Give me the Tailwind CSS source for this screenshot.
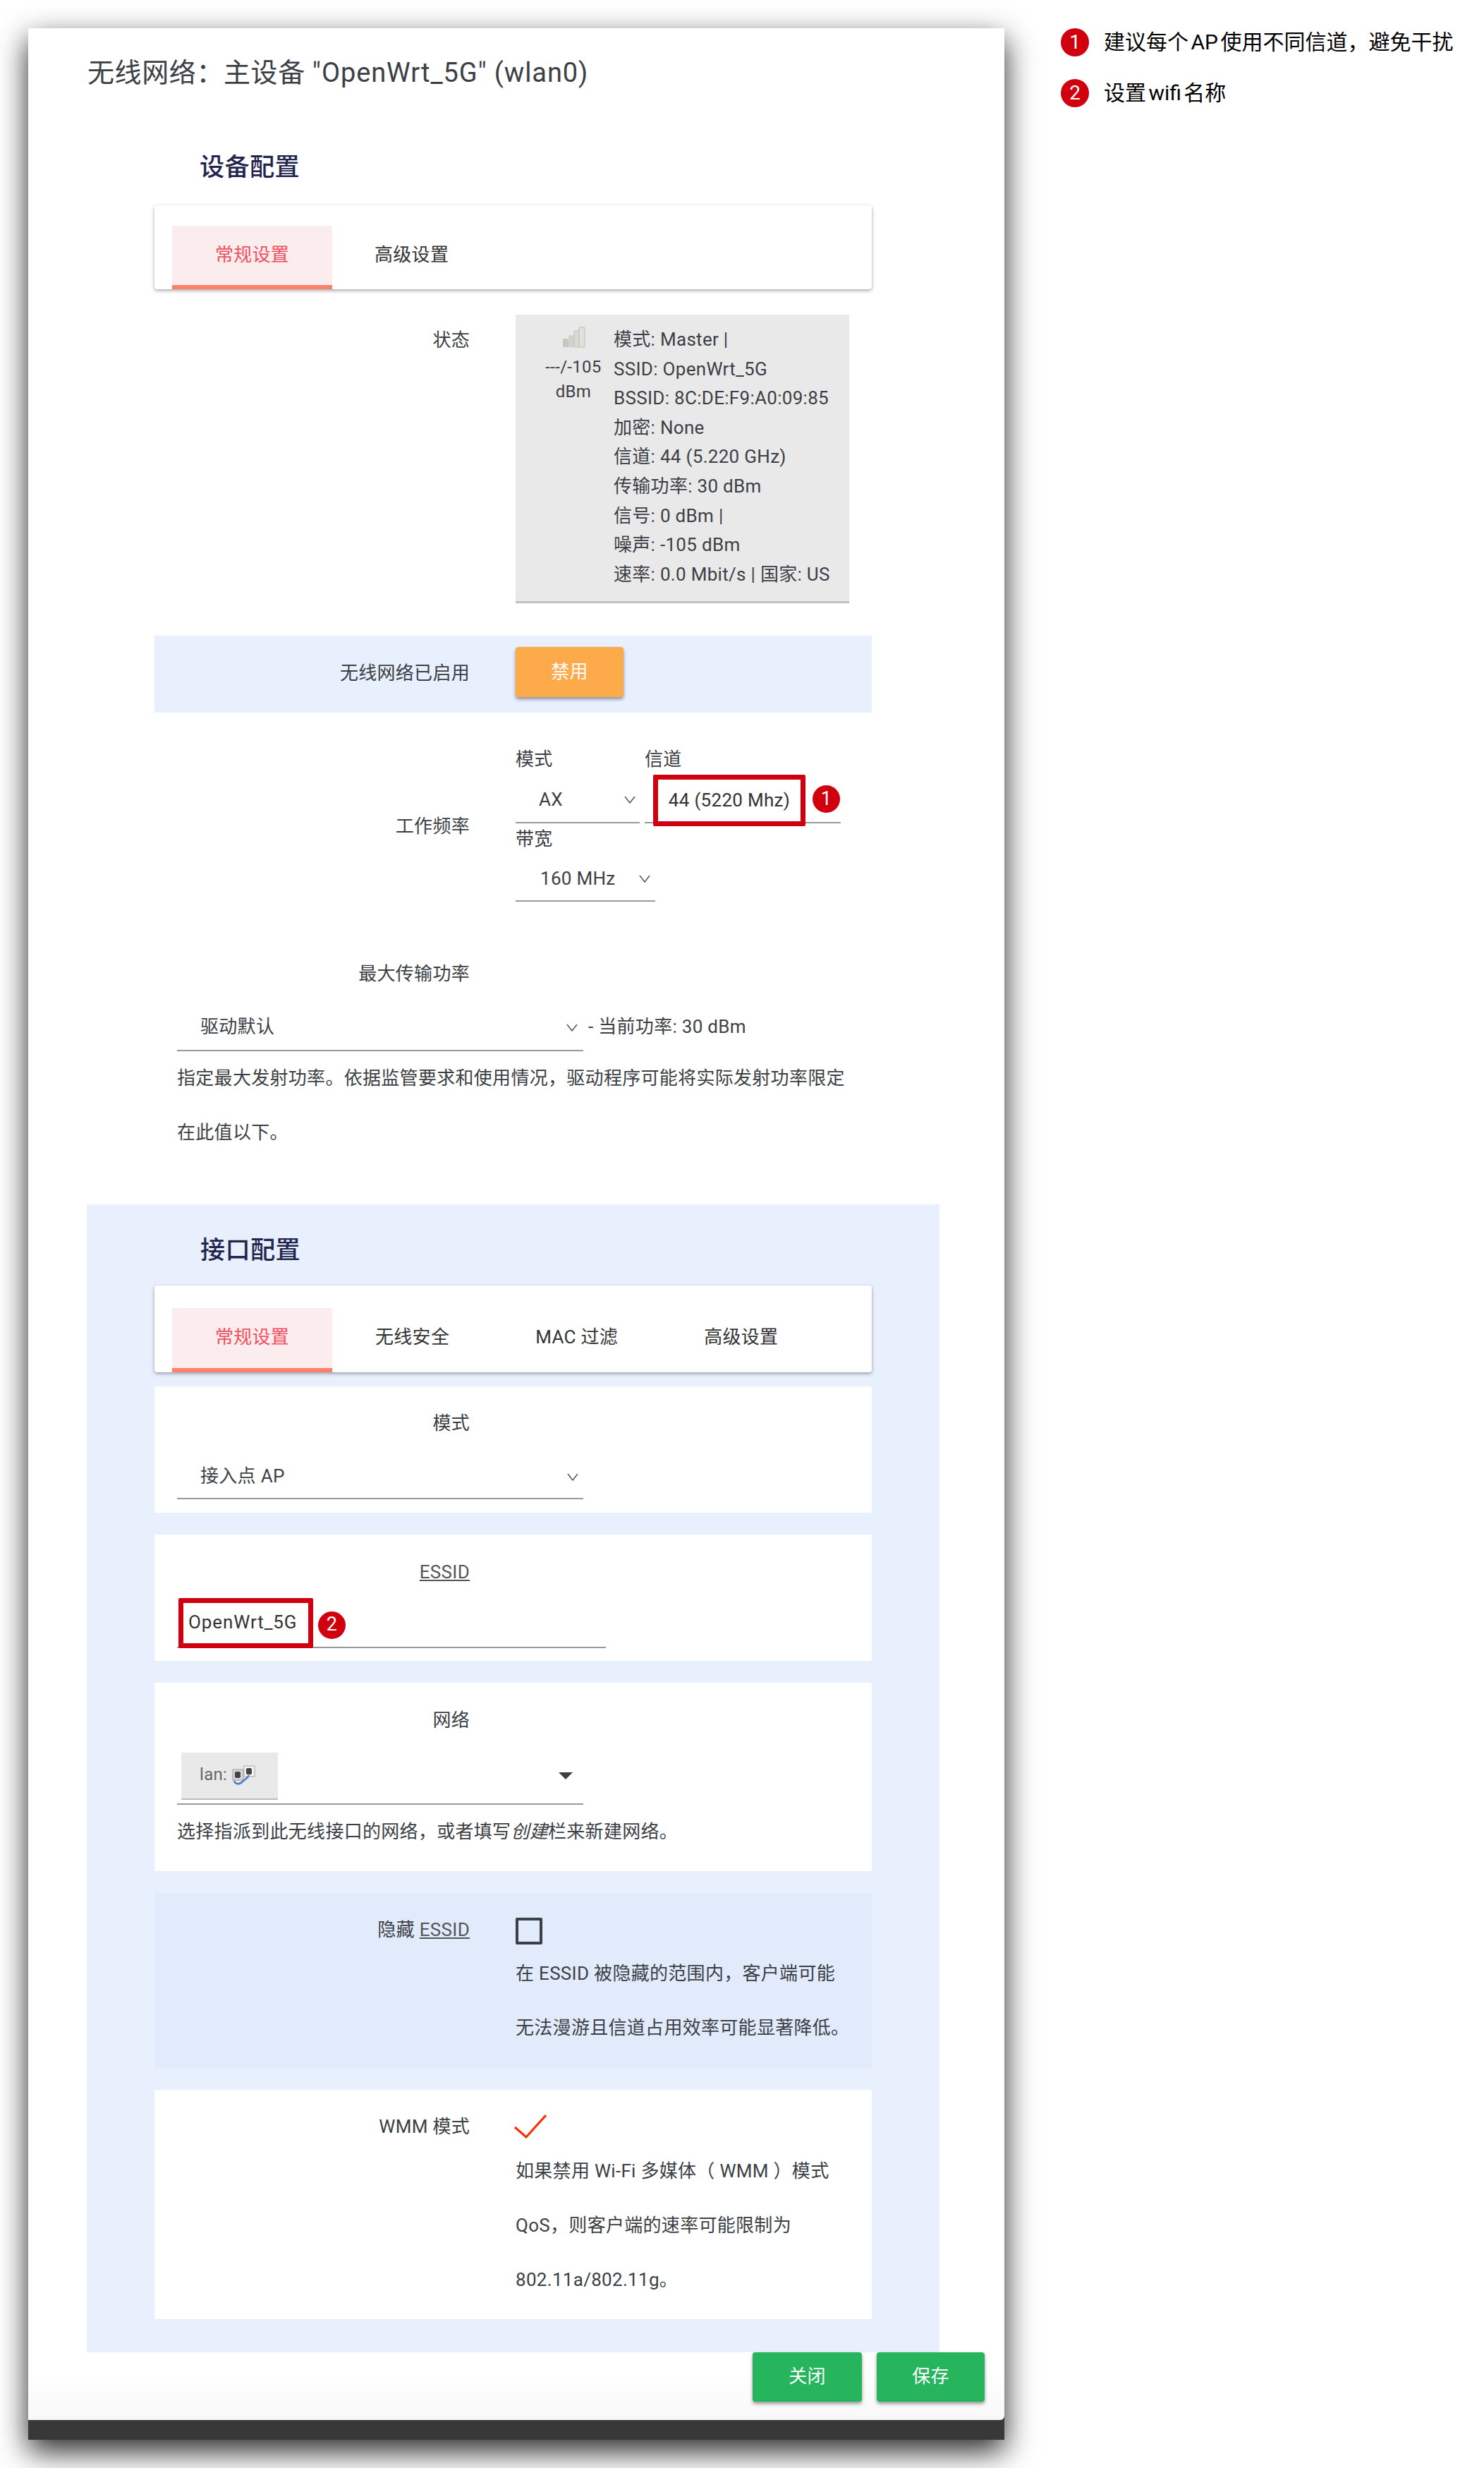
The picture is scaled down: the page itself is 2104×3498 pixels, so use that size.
<!DOCTYPE html>
<html lang="zh-CN"><head><meta charset="utf-8"><script src="https://cdn.jsdelivr.net/npm/@tailwindcss/browser@4"></script></head>
<body class="bg-white">
<div class="w-[2104px] h-[3498px] overflow-hidden flex items-start pt-10 pl-10 font-['Roboto','Noto_Sans_CJK_SC',sans-serif] text-[26px] tracking-[0.3px] leading-[41.6px] text-[#3c3f45] [text-spacing-trim:space-all]">
  <!-- window -->
  <div class="w-[1384px] h-[3418px] shrink-0 flex flex-col bg-[#383838] shadow-[0_16px_40px_rgba(0,0,0,0.85)]">
    <div class="h-[3390px] shrink-0 bg-gradient-to-b from-white from-[98%] to-[#f8f8f8] rounded-br-[6px] pt-[34px]">
      <h1 class="ml-[84px] h-[60px] flex items-center text-[38px] tracking-[0.6px] text-[#3c3f45] whitespace-pre">无线网络：主设备 <span class="tracking-[0.9px]">"OpenWrt_5G" (wlan0)</span></h1>
      <h2 class="ml-[243px] mt-[79px] h-[50px] flex items-center text-[35.2px] font-medium text-[#23254f]">设备配置</h2>
      <div class="ml-[179px] mt-[28px] w-[1017px] h-[119px] pt-[29px] pl-[25px] bg-white rounded-[4px] shadow-[0_2px_5px_rgba(0,0,0,0.35)] flex">
        <div class="w-[227px] h-[90px] bg-[#fbecee] border-b-[6px] border-[#ff8069] text-[#f0505f] flex items-center justify-center">常规设置</div>
        <div class="px-[60px] h-[90px] pb-[6px] flex items-center text-[#333]">高级设置</div>
      </div>
      <!-- status -->
      <div class="ml-[179px] mt-[36px] w-[1017px] flex">
        <div class="w-[447px] pt-[16px] text-right">状态</div>
        <div class="ml-[65px] w-[473px] h-[409px] bg-[#e9e9e9] border-b-[3px] border-[#c0c0c0] pt-[15px] flex">
          <div class="ml-[25px] w-[114px] flex flex-col items-center text-[24px] leading-[35px]">
            <svg class="mt-[2px] w-[33px] h-[30px]" viewBox="0 0 33 30"><rect x="1" y="17" width="8" height="12" rx="1" fill="#c4c8bf"/><rect x="9" y="12" width="8" height="17" rx="1" fill="#cfd3ca"/><rect x="17" y="6" width="7" height="23" rx="1" fill="#d8dbd4" stroke="#bcc0b6"/><rect x="24" y="1" width="8" height="28" rx="1" fill="#dfe1db" stroke="#bcc0b6"/></svg>
            <div class="mt-[10px]">---/-105</div>
            <div>dBm</div>
          </div>
          <div class="whitespace-nowrap">
            <div>模式: Master |</div><div>SSID: OpenWrt_5G</div><div>BSSID: 8C:DE:F9:A0:09:85</div><div>加密: None</div><div>信道: 44 (5.220 GHz)</div><div>传输功率: 30 dBm</div><div>信号: 0 dBm |</div><div>噪声: -105 dBm</div><div>速率: 0.0 Mbit/s | 国家: US</div>
          </div>
        </div>
      </div>
      <!-- enabled row -->
      <div class="ml-[179px] mt-[46px] w-[1017px] h-[109px] bg-[#e8effd] flex">
        <div class="w-[447px] pt-[33px] text-right">无线网络已启用</div>
        <div class="ml-[65px] mt-[16px] w-[153px] h-[71px] bg-[#fdaa4b] rounded-[4px] text-white flex items-center justify-center shadow-[0_3px_5px_rgba(0,0,0,0.4)]">禁用</div>
      </div>
      <!-- frequency -->
      <div class="ml-[179px] mt-[46px] w-[1017px] flex">
        <div class="w-[447px] pt-[95px] text-right">工作频率</div>
        <div class="ml-[65px]">
          <div class="flex gap-[7px]">
            <div class="w-[176px]">
              <div class="h-[42px] flex items-center">模式</div>
              <div class="h-[69px] border-b-2 border-[#999] pl-[33px] pr-[6px] pt-[15px] flex items-start justify-between">
                <span>AX</span>
                <svg class="mt-[15px] w-[16px] h-[11px]" viewBox="0 0 16 11"><path d="M1 1l7 9 7-9" fill="none" stroke="#555" stroke-width="1.5"/></svg>
              </div>
            </div>
            <div class="w-[278px]">
              <div class="h-[42px] flex items-center">信道</div>
              <div class="relative h-[69px] border-b-2 border-[#999]">
                <div class="absolute left-[12px] top-0 w-[216px] h-[73px] border-[7px] border-[#d0000f] rounded-[2px] bg-white flex items-center justify-center text-[#333]">44 (5220 Mhz)</div>
                <div class="absolute left-[238px] top-[15px] w-[39px] h-[39px] rounded-full bg-[#d0000f] text-white flex items-center justify-center text-[27px]">1</div>
              </div>
            </div>
          </div>
          <div class="w-[198px]">
            <div class="mt-[2px] h-[42px] flex items-center">带宽</div>
            <div class="h-[67px] border-b-2 border-[#999] pl-[35px] pr-[7px] pt-[14px] flex items-start justify-between">
              <span>160 MHz</span>
              <svg class="mt-[15px] w-[16px] h-[11px]" viewBox="0 0 16 11"><path d="M1 1l7 9 7-9" fill="none" stroke="#555" stroke-width="1.5"/></svg>
            </div>
          </div>
        </div>
      </div>
      <!-- tx power -->
      <div class="ml-[179px] mt-[82px] w-[447px] h-[42px] flex items-center justify-end">最大传输功率</div>
      <div class="ml-[211px] mt-[33px] flex items-end whitespace-nowrap">
        <div class="w-[576px] border-b-2 border-[#999] pl-[33px] pr-[8px] pb-[11px] flex items-start justify-between">
          <span>驱动默认</span>
          <svg class="mt-[16px] w-[16px] h-[11px]" viewBox="0 0 16 11"><path d="M1 1l7 9 7-9" fill="none" stroke="#555" stroke-width="1.5"/></svg>
        </div>
        <div class="ml-[7px] pb-[13px]">- 当前功率: 30 dBm</div>
      </div>
      <div class="ml-[211px] leading-[77px] whitespace-nowrap">
        <div>指定最大发射功率。依据监管要求和使用情况，驱动程序可能将实际发射功率限定</div>
        <div>在此值以下。</div>
      </div>
      <!-- interface panel -->
      <div class="ml-[83px] mt-[63px] w-[1209px] h-[1627px] bg-[#e8effd] pt-[41px]">
        <h2 class="ml-[161px] h-[50px] flex items-center text-[35.2px] font-medium text-[#23254f]">接口配置</h2>
        <div class="ml-[96px] mt-[24px] w-[1017px] h-[123px] pt-[32px] pl-[25px] bg-white rounded-[4px] shadow-[0_2px_5px_rgba(0,0,0,0.35)] flex">
          <div class="w-[227px] h-[91px] bg-[#fbecee] border-b-[6px] border-[#ff8069] text-[#f0505f] flex items-center justify-center">常规设置</div>
          <div class="px-[61px] h-[91px] pb-[6px] flex items-center text-[#333]">无线安全</div>
          <div class="px-[61px] h-[91px] pb-[6px] flex items-center text-[#333]">MAC 过滤</div>
          <div class="px-[61px] h-[91px] pb-[6px] flex items-center text-[#333]">高级设置</div>
        </div>
        <!-- mode -->
        <div class="ml-[96px] mt-[20px] w-[1017px] h-[179px] bg-white pt-[32px]">
          <div class="w-[447px] h-[42px] flex items-center justify-end">模式</div>
          <div class="ml-[32px] mt-[33px] w-[576px] border-b-2 border-[#999] pl-[33px] pr-[7px] pb-[10px] flex items-start justify-between">
            <span>接入点 AP</span>
            <svg class="mt-[16px] w-[16px] h-[11px]" viewBox="0 0 16 11"><path d="M1 1l7 9 7-9" fill="none" stroke="#555" stroke-width="1.5"/></svg>
          </div>
        </div>
        <!-- essid -->
        <div class="ml-[96px] mt-[31px] w-[1017px] h-[179px] bg-white pt-[33px]">
          <div class="w-[447px] h-[42px] flex items-center justify-end"><span class="underline text-[#555]">ESSID</span></div>
          <div class="relative ml-[32px] w-[608px] h-[86px] border-b-2 border-[#999]">
            <div class="absolute left-[2px] top-[15px] w-[191px] h-[71px] border-[7px] border-[#d0000f] rounded-[2px] bg-white pl-[7px] flex items-center text-[#333] tracking-[0.9px]">OpenWrt_5G</div>
            <div class="absolute left-[200px] top-[34px] w-[39px] h-[39px] rounded-full bg-[#d0000f] text-white flex items-center justify-center text-[27px]">2</div>
          </div>
        </div>
        <!-- network -->
        <div class="ml-[96px] mt-[31px] w-[1017px] h-[267px] bg-white pt-[33px]">
          <div class="w-[447px] h-[42px] flex items-center justify-end">网络</div>
          <div class="ml-[32px] mt-[24px] w-[576px] pl-[6px] pb-[5px] pr-[15px] border-b-2 border-[#999] flex items-center justify-between">
            <div class="w-[137px] h-[67px] bg-[#e9e9e9] border-b-2 border-[#bbb] pl-[26px] flex items-center gap-[7px] text-[#666] text-[24px]">
              <span>lan:</span>
              <svg class="w-[33px] h-[28px]" viewBox="0 0 33 28"><rect x="1" y="6" width="15" height="15" fill="#d8d8d8" stroke="#999"/><rect x="17" y="1" width="15" height="15" fill="#f2f2f2" stroke="#aaa"/><rect x="4" y="9" width="8" height="9" rx="2" fill="#444"/><rect x="20" y="4" width="8" height="9" rx="2" fill="#444"/><path d="M3 22c2 6 8 5 12 1s7-4 9-9" fill="none" stroke="#4a7fc9" stroke-width="2.5"/></svg>
            </div>
            <svg class="w-[20px] h-[10px]" viewBox="0 0 20 10"><path d="M0 0h20l-10 10z" fill="#3c3f45"/></svg>
          </div>
          <div class="ml-[32px] mt-[18px]">选择指派到此无线接口的网络，或者填写<em>创建</em>栏来新建网络。</div>
        </div>
        <!-- hide -->
        <div class="ml-[96px] mt-[31px] w-[1017px] h-[248px] bg-[#e1ebfc] flex">
          <div class="w-[447px] pt-[32px] text-right">隐藏 <span class="underline text-[#555]">ESSID</span></div>
          <div class="ml-[65px] pt-[35px] whitespace-nowrap">
            <div class="w-[38px] h-[38px] border-[4px] border-[#3c3f45] rounded-[2px]"></div>
            <div class="mt-[3px] leading-[77px]">
              <div>在 ESSID 被隐藏的范围内，客户端可能</div>
              <div>无法漫游且信道占用效率可能显著降低。</div>
            </div>
          </div>
        </div>
        <!-- wmm -->
        <div class="ml-[96px] mt-[31px] w-[1017px] h-[325px] bg-white flex">
          <div class="w-[447px] pt-[32px] text-right">WMM 模式</div>
          <div class="ml-[65px] pt-[35px] whitespace-nowrap">
            <svg class="-ml-[2px] w-[46px] h-[34px]" viewBox="0 0 46 34"><path d="M1 18l16 14L45 1" fill="none" stroke="#ff2b00" stroke-width="3"/></svg>
            <div class="mt-[8px] leading-[77px]">
              <div>如果禁用 Wi-Fi 多媒体（ WMM ）模式</div>
              <div>QoS，则客户端的速率可能限制为</div>
              <div>802.11a/802.11g。</div>
            </div>
          </div>
        </div>
      </div>
      <!-- buttons -->
      <div class="flex justify-end gap-[21px] pr-[28px]">
        <div class="w-[155px] h-[70px] bg-[#26b55d] rounded-[4px] text-white flex items-center justify-center shadow-[0_3px_5px_rgba(0,0,0,0.4)]">关闭</div>
        <div class="w-[153px] h-[70px] bg-[#26b55d] rounded-[4px] text-white flex items-center justify-center shadow-[0_3px_5px_rgba(0,0,0,0.4)]">保存</div>
      </div>
    </div>
  </div>
  <!-- annotations -->
  <div class="ml-[80px] shrink-0 text-[30px] tracking-normal text-black whitespace-nowrap [word-spacing:-4px]">
    <div class="h-[40px] flex items-center gap-[21px]">
      <span class="w-[40px] h-[40px] rounded-full bg-[#d0000f] text-white flex items-center justify-center text-[28px]">1</span>
      <span>建议每个 AP 使用不同信道，避免干扰</span>
    </div>
    <div class="mt-[32px] h-[40px] flex items-center gap-[21px]">
      <span class="w-[40px] h-[40px] rounded-full bg-[#d0000f] text-white flex items-center justify-center text-[28px]">2</span>
      <span>设置 wifi 名称</span>
    </div>
  </div>
</div>
</body></html>
